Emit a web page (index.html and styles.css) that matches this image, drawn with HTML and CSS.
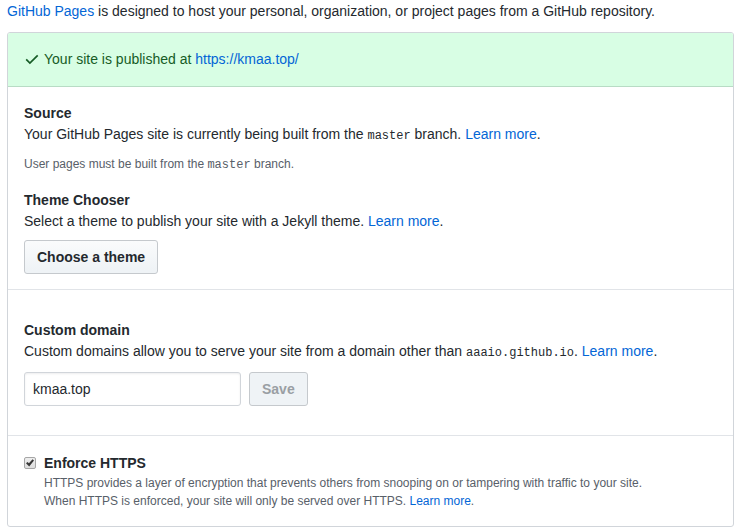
FILE: index.html
```html
<!DOCTYPE html>
<html lang="en">
<head>
<meta charset="utf-8">
<title>GitHub Pages</title>
<link rel="stylesheet" href="styles.css">
</head>
<body>
<main>
  <p class="intro"><a href="#">GitHub Pages</a> is designed to host your personal, organization, or project pages from a GitHub repository.</p>
  <div class="box">
    <div class="flash">
      <svg class="check" viewBox="0 0 14 13" width="14" height="13" aria-hidden="true"><path fill="none" stroke="currentColor" stroke-width="1.7" d="M1.200 6.400L4.900 10L12.700 2.300"/></svg>
      <p>Your site is published at <a href="#">https://kmaa.top/</a></p>
    </div>
    <section class="row build">
      <h2>Source</h2>
      <p>Your GitHub Pages site is currently being built from the <code>master</code> branch. <a href="#">Learn more</a>.</p>
      <p class="note">User pages must be built from the <code>master</code> branch.</p>
      <h2>Theme Chooser</h2>
      <p>Select a theme to publish your site with a Jekyll theme. <a href="#">Learn more</a>.</p>
      <button class="btn" type="button">Choose a theme</button>
    </section>
    <section class="row domain">
      <h2><label for="domain">Custom domain</label></h2>
      <p>Custom domains allow you to serve your site from a domain other than <code>aaaio.github.io</code>. <a href="#">Learn more</a>.</p>
      <form class="form">
        <input class="field" id="domain" type="text" value="kmaa.top">
        <button class="btn" type="submit" disabled>Save</button>
      </form>
    </section>
    <section class="row https">
      <input class="tick" id="https" type="checkbox" checked>
      <div>
        <h2><label for="https">Enforce HTTPS</label></h2>
        <p class="small">HTTPS provides a layer of encryption that prevents others from snooping on or tampering with traffic to your site.<br>When HTTPS is enforced, your site will only be served over HTTPS. <a href="#">Learn more</a>.</p>
      </div>
    </section>
  </div>
</main>
</body>
</html>
```
FILE: styles.css
```css
* { box-sizing: border-box; }
body {
  margin: 0;
  background: #fff;
  color: #24292e;
  font: 14px/21px "Liberation Sans", Arial, sans-serif;
}
main { padding: 1px 12px 0 7px; }
p, h2 { margin: 0; }
h2 { font-size: 14px; font-weight: 700; line-height: 21px; }
a { color: #0366d6; text-decoration: none; }
code { font: 12px "Liberation Mono", monospace; }
.intro { margin-bottom: 10px; }
.box { border: 1px solid #d1d5da; border-radius: 3px; }
.flash {
  display: flex;
  align-items: center;
  gap: 5px;
  padding: 16px 17px;
  border-bottom: 1px solid #b8dcc5;
  border-radius: 2px 2px 0 0;
  background: #d8fee4;
  color: #165c26;
}
.row { padding: 16px; }
.row + .row { border-top: 1px solid #e1e4e8; }
.build { padding-bottom: 15px; }
.note { margin: 10px 0 17px; color: #586069; font-size: 12px; line-height: 18px; }
.btn {
  padding: 6px 12px;
  border: 1px solid #c5c9cd;
  border-radius: 3px;
  background: linear-gradient(#fafbfc, #eff3f6 90%);
  color: #24292e;
  font: 700 14px/20px "Liberation Sans", Arial, sans-serif;
}
.build .btn { margin-top: 8px; }
.btn:disabled { background: #eff3f6; color: #9a9fa4; }
.domain { padding: 30px 16px 29px; }
.form { display: flex; gap: 8px; margin-top: 10px; }
.field {
  width: 217px;
  padding: 6px 8px;
  border: 1px solid #d1d5da;
  border-radius: 3px;
  background: #fff;
  box-shadow: inset 0 1px 2px rgba(27, 31, 35, 0.08);
  color: #24292e;
  font: 14px/20px "Liberation Sans", Arial, sans-serif;
}
.https { display: flex; align-items: flex-start; gap: 8px; padding-top: 17px; }
.tick {
  flex: none;
  display: grid;
  place-items: center;
  width: 12px;
  height: 12px;
  margin: 4px 0 0;
  border: 1px solid #a6a6a6;
  border-radius: 2px;
  background: linear-gradient(#eee, #dedede);
  appearance: none;
}
.tick:checked::before {
  content: "";
  width: 8px;
  height: 8px;
  background: #383838;
  clip-path: polygon(0 54%, 20% 36%, 36% 54%, 82% 2%, 100% 20%, 40% 94%);
}
.small { color: #586069; font-size: 12px; line-height: 18px; }
```
